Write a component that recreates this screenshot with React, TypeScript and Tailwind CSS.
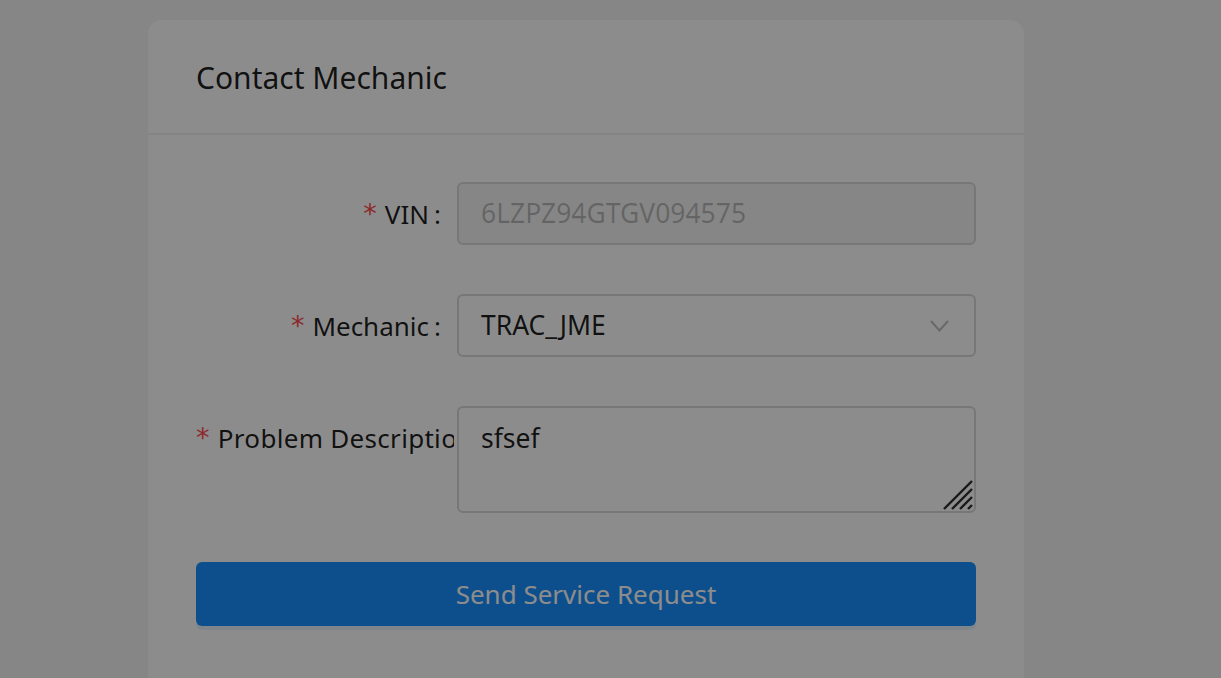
import { useState } from "react";

const font = { fontFamily: '"Noto Sans", "Open Sans", Arial, sans-serif' };
const star = { fontFamily: "SimSun, 'DejaVu Sans', sans-serif" };

function Label({ text }: { text: string }) {
  return (
    <div className="w-[261px] shrink-0 overflow-hidden whitespace-nowrap h-[63px] flex items-center justify-end">
      <label className="inline-flex items-center text-[26px] text-black/[0.88] leading-none">
        <span className="text-[#ff4d4f] mr-[8px] text-[27px]" style={star}>*</span>
        <span>{text}</span>
        <span className="ml-[5px] mr-[16px]">:</span>
      </label>
    </div>
  );
}

function Grip() {
  return (
    <svg className="absolute right-[3px] bottom-[3px]" width="30" height="30" viewBox="0 0 30 30">
      <g stroke="#2f2f2f" strokeWidth="2.4">
        <line x1="1" y1="29" x2="29" y2="1" />
        <line x1="9" y1="29" x2="29" y2="9" />
        <line x1="17" y1="29" x2="29" y2="17" />
        <line x1="25" y1="29" x2="29" y2="25" />
      </g>
    </svg>
  );
}

export default function App() {
  const [desc, setDesc] = useState("sfsef");

  return (
    <div className="min-h-screen bg-[#f5f5f5] pt-[20px] relative overflow-hidden" style={font}>
      <div className="ml-[148px] w-[876px] bg-white rounded-[14px]">
        {/* Header */}
        <div className="h-[115px] border-b-2 border-[#f0f0f0] px-[48px] flex items-center">
          <h2 className="text-[30px] text-black/[0.88] font-normal pt-[2px]">Contact Mechanic</h2>
        </div>

        {/* Body */}
        <div className="px-[48px] pt-[47px] pb-[48px]">
          <div className="flex items-start mb-[49px]">
            <Label text="VIN" />
            <div className="flex-1 h-[63px] rounded-[6px] border-2 border-[#d9d9d9] bg-[#f5f5f5] flex items-center px-[22px] text-[26.5px] text-black/25">
              6LZPZ94GTGV094575
            </div>
          </div>

          <div className="flex items-start mb-[49px]">
            <Label text="Mechanic" />
            <div className="flex-1 h-[63px] rounded-[6px] border-2 border-[#d9d9d9] bg-white flex items-center justify-between pl-[22px] pr-[25px] text-[26.5px] text-black/[0.88]">
              <span>TRAC_JME</span>
              <svg width="19" height="12" viewBox="0 0 19 12" fill="none">
                <path d="M1 1 L9.5 10.5 L18 1" stroke="rgba(0,0,0,0.25)" strokeWidth="2" />
              </svg>
            </div>
          </div>

          <div className="flex items-start mb-[49px]">
            <div className="w-[258px] mr-[3px] shrink-0 overflow-hidden whitespace-nowrap h-[63px] flex items-center">
              <label className="inline-flex items-center text-[26px] text-black/[0.88] leading-none tracking-[0.3px]">
                <span className="text-[#ff4d4f] mr-[8px] text-[27px]" style={star}>*</span>
                <span>Problem Description</span>
                <span className="ml-[5px]">:</span>
              </label>
            </div>
            <div className="flex-1 relative">
              <textarea
                value={desc}
                onChange={(e) => setDesc(e.target.value)}
                className="block w-full h-[107px] rounded-[6px] border-2 border-[#d9d9d9] bg-white px-[22px] pt-[12px] text-[26.5px] text-black/[0.88] resize-none outline-none leading-[1.4]"
                style={font}
              />
              <Grip />
            </div>
          </div>

          <button className="w-full h-[64px] rounded-[6px] bg-[#1890ff] text-white text-[26px] shadow-[0_4px_0_rgba(5,145,255,0.1)] mb-[48px]">
            Send Service Request
          </button>
        </div>
      </div>

      {/* modal mask */}
      <div className="fixed inset-0 bg-black/45" />
    </div>
  );
}
